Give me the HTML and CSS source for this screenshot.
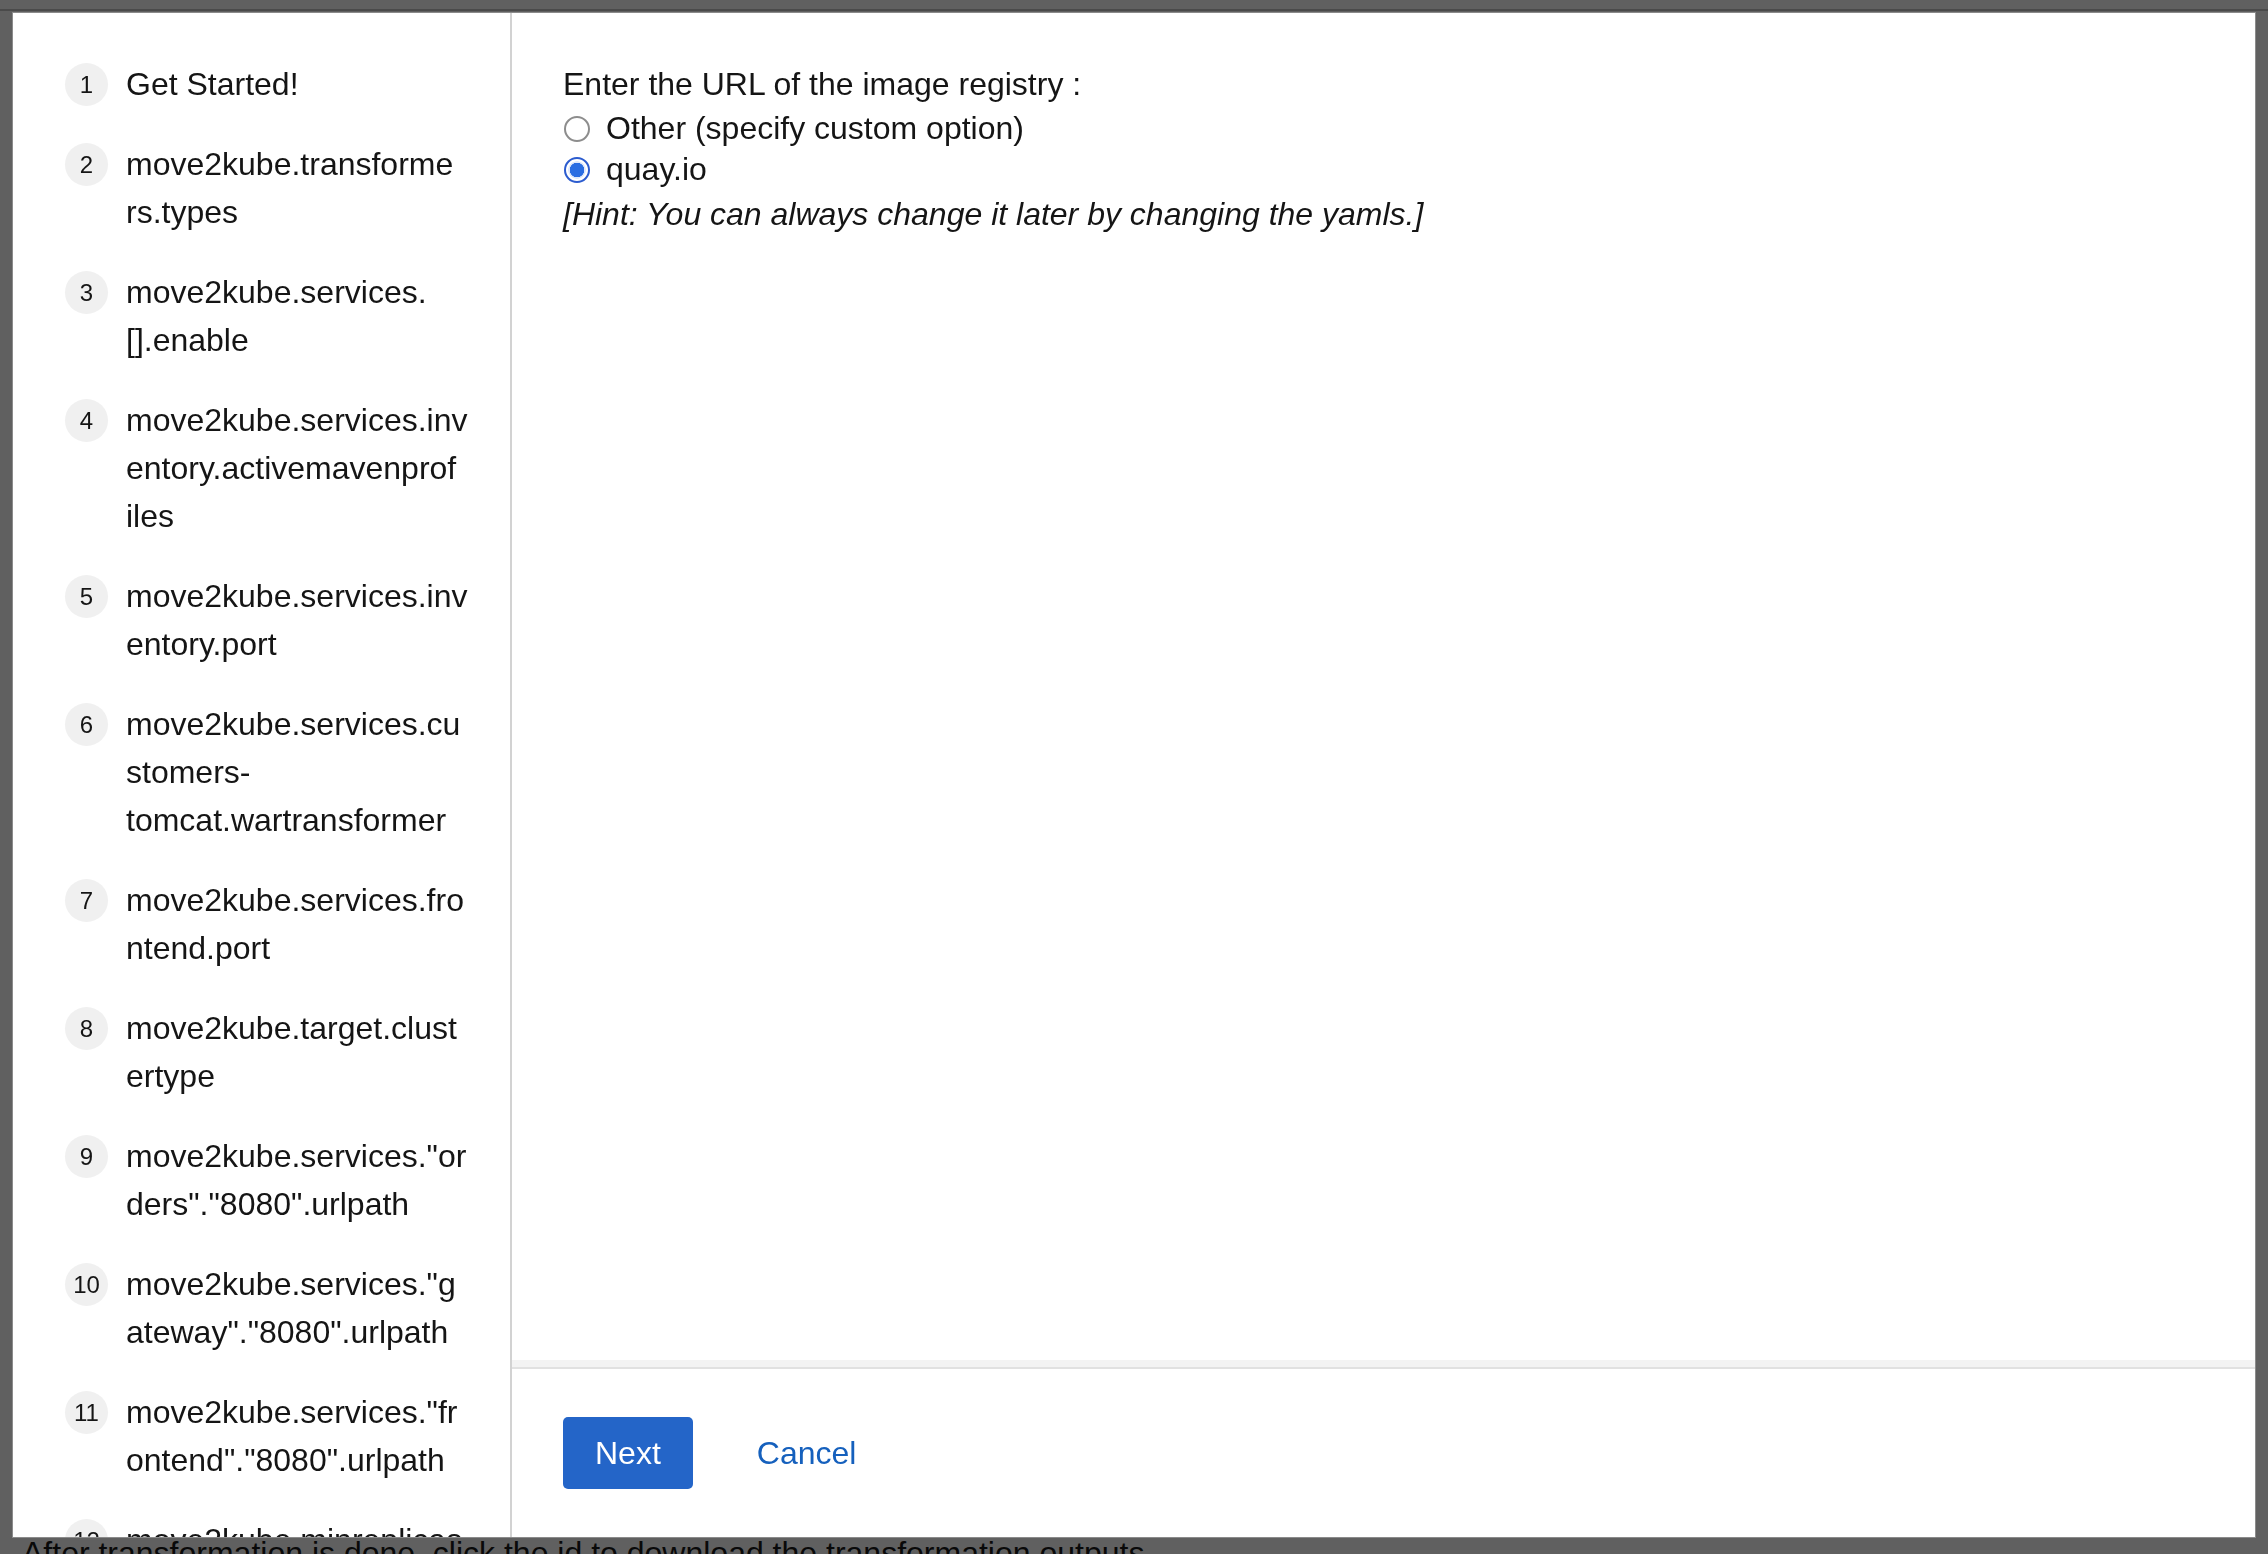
FILE: index.html
```html
<!DOCTYPE html>
<html lang="en">
<head>
<meta charset="utf-8">
<title>Move2Kube QA</title>
<link rel="stylesheet" href="styles.css">
</head>
<body>
<div class="page">
  <header class="page-header"></header>
  <div class="page-main"></div>
  <p class="page-note">After transformation is done, click the id to download the transformation outputs.</p>
</div>

<div class="backdrop">
  <div class="modal" role="dialog">
    <nav class="wizard-nav">
      <ol class="nav-list">
        <li class="nav-item"><span class="step-num">1</span><span class="step-label"><span>Get Started!</span></span></li>
        <li class="nav-item"><span class="step-num">2</span><span class="step-label"><span>move2kube.transforme</span><span>rs.types</span></span></li>
        <li class="nav-item"><span class="step-num">3</span><span class="step-label"><span>move2kube.services.</span><span>[].enable</span></span></li>
        <li class="nav-item"><span class="step-num">4</span><span class="step-label"><span>move2kube.services.inv</span><span>entory.activemavenprof</span><span>iles</span></span></li>
        <li class="nav-item"><span class="step-num">5</span><span class="step-label"><span>move2kube.services.inv</span><span>entory.port</span></span></li>
        <li class="nav-item"><span class="step-num">6</span><span class="step-label"><span>move2kube.services.cu</span><span>stomers-</span><span>tomcat.wartransformer</span></span></li>
        <li class="nav-item"><span class="step-num">7</span><span class="step-label"><span>move2kube.services.fro</span><span>ntend.port</span></span></li>
        <li class="nav-item"><span class="step-num">8</span><span class="step-label"><span>move2kube.target.clust</span><span>ertype</span></span></li>
        <li class="nav-item"><span class="step-num">9</span><span class="step-label"><span>move2kube.services."or</span><span>ders"."8080".urlpath</span></span></li>
        <li class="nav-item"><span class="step-num">10</span><span class="step-label"><span>move2kube.services."g</span><span>ateway"."8080".urlpath</span></span></li>
        <li class="nav-item"><span class="step-num">11</span><span class="step-label"><span>move2kube.services."fr</span><span>ontend"."8080".urlpath</span></span></li>
        <li class="nav-item"><span class="step-num">12</span><span class="step-label"><span>move2kube.minreplicas</span></span></li>
      </ol>
    </nav>

    <div class="wizard-main">
      <div class="wizard-body">
        <p class="question">Enter the URL of the image registry :</p>
        <label class="option"><input type="radio" name="registry" class="radio"><span>Other (specify custom option)</span></label>
        <label class="option"><input type="radio" name="registry" class="radio" checked><span>quay.io</span></label>
        <p class="hint">[Hint: You can always change it later by changing the yamls.]</p>
      </div>
      <footer class="wizard-footer">
        <button class="btn btn-primary" type="button">Next</button>
        <button class="btn btn-link" type="button">Cancel</button>
      </footer>
    </div>
  </div>
</div>
</body>
</html>
```

FILE: styles.css
```css
html, body {
  margin: 0;
  padding: 0;
}

body {
  width: 2268px;
  height: 1554px;
  overflow: hidden;
  font-family: "Liberation Sans", Arial, sans-serif;
  color: #151515;
  background: #fff;
}

/* underlying page, seen through the backdrop */
.page {
  height: 1554px;
  background: #fff;
}

.page-header {
  height: 9px;
  border-bottom: 2px solid #c4c4c4;
}

.page-main {
  height: 1526px;
}

.page-note {
  margin: 0;
  padding-left: 22px;
  font-size: 32px;
  line-height: 32px;
  white-space: nowrap;
  color: #151515;
}

/* modal */
.backdrop {
  position: fixed;
  inset: 0;
  background: rgba(3, 3, 3, 0.63);
  padding: 13px 13px 17px 13px;
  display: flex;
}

.modal {
  flex: 1;
  display: flex;
  background: #fff;
  overflow: hidden;
  box-shadow: 0 0 0 1px rgba(220, 220, 220, 0.35);
}

/* wizard nav */
.wizard-nav {
  flex: 0 0 499px;
  box-sizing: border-box;
  border-right: 2px solid #d2d2d2;
  padding: 47px 0 0 52px;
  overflow: hidden;
}

.nav-list {
  list-style: none;
  margin: 0;
  padding: 0;
  display: flex;
  flex-direction: column;
  gap: 32px;
}

.nav-item {
  display: flex;
  gap: 18px;
  font-size: 32px;
  line-height: 48px;
}

.step-num {
  flex: 0 0 43px;
  height: 43px;
  margin-top: 3px;
  border-radius: 50%;
  background: #f0f0f0;
  font-size: 24px;
  line-height: 43px;
  text-align: center;
  color: #151515;
}

.step-label span {
  display: block;
  white-space: nowrap;
}

/* wizard main */
.wizard-main {
  flex: 1;
  min-width: 0;
  display: flex;
  flex-direction: column;
}

.wizard-body {
  flex: 1;
  padding: 47px 51px 0 51px;
  border-bottom: 7px solid #f3f3f3;
}

.question {
  margin: 0;
  font-size: 32px;
  line-height: 48px;
}

.option {
  display: flex;
  align-items: center;
  gap: 16px;
  height: 41px;
  font-size: 32px;
  line-height: 41px;
}

.radio {
  appearance: none;
  -webkit-appearance: none;
  box-sizing: border-box;
  width: 26px;
  height: 26px;
  margin: 0 0 0 1px;
  border: 2px solid #8d8d8d;
  border-radius: 50%;
  background: #fff;
}

.radio:checked {
  border-color: #2c5ccf;
  background: radial-gradient(circle, #2a6de2 0 7px, #dfe8fb 7.5px 8.5px, #fff 9px);
}

.hint {
  margin: 0;
  font-size: 32px;
  line-height: 48px;
  font-style: italic;
}

/* footer */
.wizard-footer {
  border-top: 2px solid #e1e1e1;
  padding: 48px 51px;
  display: flex;
  align-items: center;
  gap: 32px;
}

.btn {
  font-family: inherit;
  font-size: 32px;
  line-height: 48px;
  padding: 12px 32px;
  border: 0;
  border-radius: 5px;
  cursor: pointer;
}

.btn-primary {
  background: #2465c8;
  color: #fff;
}

.btn-link {
  background: transparent;
  color: #1560bd;
}
```
